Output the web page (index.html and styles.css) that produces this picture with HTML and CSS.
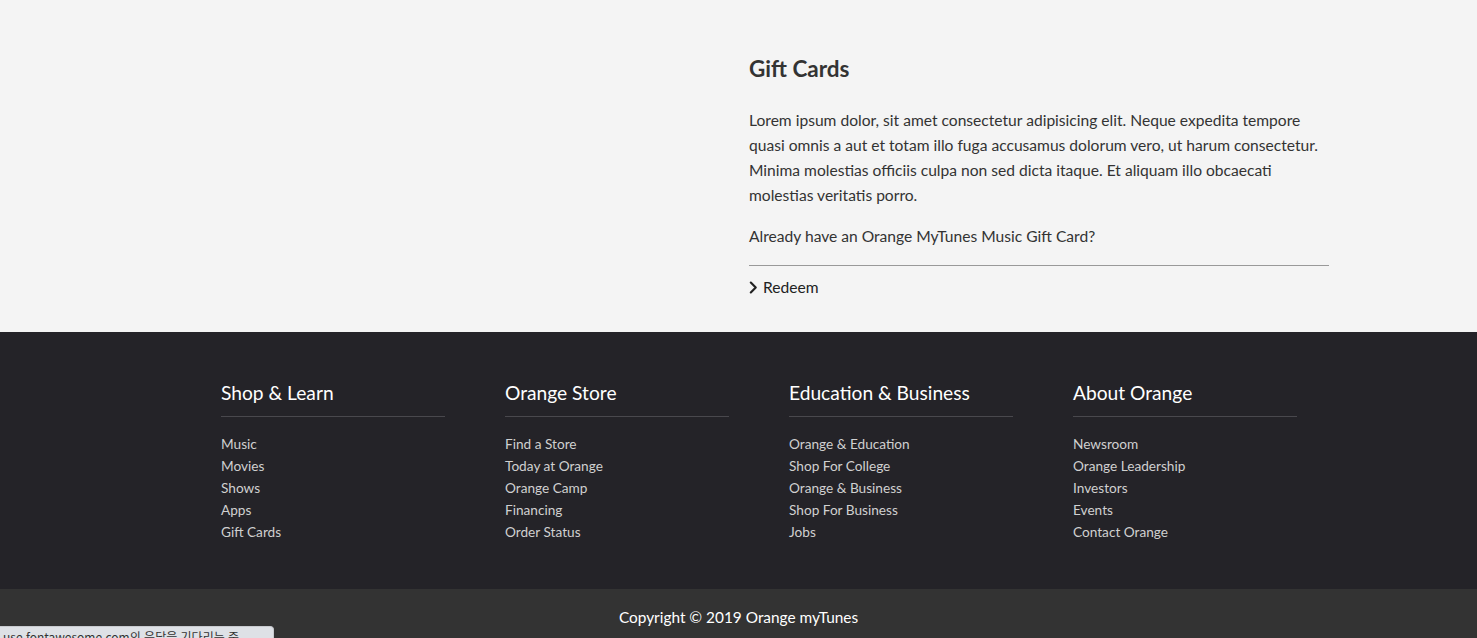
FILE: index.html
```html
<!DOCTYPE html>
<html lang="ko">
<head>
<meta charset="utf-8">
<title>Gift Cards</title>
<link rel="stylesheet" href="styles.css">
</head>
<body>
<section class="gift">
  <div class="gift-media"></div>
  <div class="gift-body">
    <h2 class="gift-title">Gift Cards</h2>
    <p class="gift-text">Lorem ipsum dolor, sit amet consectetur adipisicing elit. Neque expedita tempore quasi omnis a aut et totam illo fuga accusamus dolorum vero, ut harum consectetur. Minima molestias officiis culpa non sed dicta itaque. Et aliquam illo obcaecati molestias veritatis porro.</p>
    <p class="gift-question">Already have an Orange MyTunes Music Gift Card?</p>
    <hr class="gift-rule">
    <a class="redeem" href="#"><svg class="chev" viewBox="0 0 10 14" width="9" height="13"><path d="M2 1.5 L7.5 7 L2 12.5" fill="none" stroke="#222" stroke-width="2.4" stroke-linecap="round" stroke-linejoin="round"/></svg>Redeem</a>
  </div>
</section>
<footer class="footer">
  <div class="footer-cols">
    <div class="fcol">
      <h3 class="fcol-title">Shop &amp; Learn</h3>
      <ul class="fcol-list">
        <li><a href="#">Music</a></li>
        <li><a href="#">Movies</a></li>
        <li><a href="#">Shows</a></li>
        <li><a href="#">Apps</a></li>
        <li><a href="#">Gift Cards</a></li>
      </ul>
    </div>
    <div class="fcol">
      <h3 class="fcol-title">Orange Store</h3>
      <ul class="fcol-list">
        <li><a href="#">Find a Store</a></li>
        <li><a href="#">Today at Orange</a></li>
        <li><a href="#">Orange Camp</a></li>
        <li><a href="#">Financing</a></li>
        <li><a href="#">Order Status</a></li>
      </ul>
    </div>
    <div class="fcol">
      <h3 class="fcol-title">Education &amp; Business</h3>
      <ul class="fcol-list">
        <li><a href="#">Orange &amp; Education</a></li>
        <li><a href="#">Shop For College</a></li>
        <li><a href="#">Orange &amp; Business</a></li>
        <li><a href="#">Shop For Business</a></li>
        <li><a href="#">Jobs</a></li>
      </ul>
    </div>
    <div class="fcol">
      <h3 class="fcol-title">About Orange</h3>
      <ul class="fcol-list">
        <li><a href="#">Newsroom</a></li>
        <li><a href="#">Orange Leadership</a></li>
        <li><a href="#">Investors</a></li>
        <li><a href="#">Events</a></li>
        <li><a href="#">Contact Orange</a></li>
      </ul>
    </div>
  </div>
</footer>
<div class="copyright">Copyright © 2019 Orange myTunes</div>
<div class="status">use.fontawesome.com의 응답을 기다리는 중...</div>
</body>
</html>
```
FILE: styles.css
```css
* { box-sizing: border-box; }
html, body { margin: 0; padding: 0; }
body {
  font-family: "Lato", "Liberation Sans", sans-serif;
  color: #333;
  background: #333;
  overflow: hidden;
}
.gift {
  background: #f4f4f4;
  height: 332px;
  display: flex;
}
.gift-media { width: 749px; flex: none; }
.gift-body {
  width: 580px;
  padding-top: 53px;
}
.gift-title {
  margin: 0;
  font-size: 22.5px;
  font-weight: 700;
  line-height: 32px;
  color: #333;
}
.gift-text {
  margin: 23px 0 0;
  font-size: 15.6px;
  line-height: 25px;
  color: #333;
}
.gift-question {
  margin: 16px 0 0;
  font-size: 15.6px;
  line-height: 25px;
}
.gift-rule {
  margin: 16px 0 0;
  border: 0;
  border-top: 1px solid #999;
  height: 0;
}
.redeem {
  display: flex;
  align-items: center;
  gap: 5px;
  margin-top: 10px;
  font-size: 15.6px;
  line-height: 22px;
  color: #222;
  text-decoration: none;
}
.chev { flex: none; }
.footer {
  background: #242328;
  height: 257px;
  padding: 49px 0 0 221px;
}
.footer-cols {
  display: flex;
  gap: 60px;
}
.fcol { width: 224px; }
.fcol-title {
  margin: 0;
  font-size: 19.2px;
  font-weight: 400;
  line-height: 24px;
  color: #fff;
  padding-bottom: 11px;
  border-bottom: 1px solid #49484d;
}
.fcol-list {
  list-style: none;
  margin: 16px 0 0;
  padding: 0;
}
.fcol-list li { font-size: 13.65px; line-height: 22px; }
.fcol-list a { color: #d0d0d0; text-decoration: none; }
.copyright {
  background: #333;
  height: 49px;
  text-align: center;
  color: #fff;
  font-size: 15.4px;
  line-height: 20px;
  padding-top: 18px;
}
.status {
  position: fixed;
  left: 0;
  top: 626px;
  width: 274px;
  height: 22px;
  background: #dee1e6;
  border-top-right-radius: 4px;
  border: 1px solid #c8cacf;
  border-left: 0;
  font-family: "Noto Sans CJK KR", "Liberation Sans", sans-serif;
  font-size: 12px;
  line-height: 16px;
  padding: 2px 0 0 3px;
  color: #333;
  white-space: nowrap;
  overflow: hidden;
}
```
